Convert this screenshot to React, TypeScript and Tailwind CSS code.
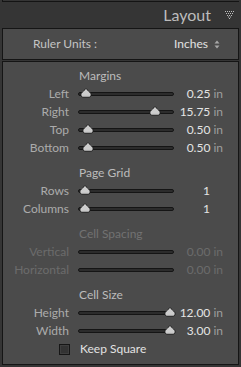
import React from 'react'

type Row = {
  label: string
  value?: string
  unit?: boolean
  pos?: number
}

type Section = {
  title: string
  disabled?: boolean
  rows: Row[]
}

const sections: Section[] = [
  {
    title: 'Margins',
    rows: [
      { label: 'Left', value: '0.25', unit: true, pos: 0.08 },
      { label: 'Right', value: '15.75', unit: true, pos: 0.8 },
      { label: 'Top', value: '0.50', unit: true, pos: 0.1 },
      { label: 'Bottom', value: '0.50', unit: true, pos: 0.1 },
    ],
  },
  {
    title: 'Page Grid',
    rows: [
      { label: 'Rows', value: '1', pos: 0.07 },
      { label: 'Columns', value: '1', pos: 0.07 },
    ],
  },
  {
    title: 'Cell Spacing',
    disabled: true,
    rows: [
      { label: 'Vertical', value: '0.00', unit: true },
      { label: 'Horizontal', value: '0.00', unit: true },
    ],
  },
  {
    title: 'Cell Size',
    rows: [
      { label: 'Height', value: '12.00', unit: true, pos: 0.96 },
      { label: 'Width', value: '3.00', unit: true, pos: 0.96 },
    ],
  },
]

function Thumb() {
  return (
    <svg width="12" height="10" viewBox="0 0 12 10" className="block">
      <path
        d="M6 0.5 C7 2 9.5 3.5 10.8 5.5 C11.6 7 10.8 9.3 9 9.3 L3 9.3 C1.2 9.3 0.4 7 1.2 5.5 C2.5 3.5 5 2 6 0.5 Z"
        fill="#cdcdcd"
        stroke="#1c1c1c"
        strokeWidth="0.9"
      />
      <path d="M3 8.4 L9 8.4" stroke="#9a9a9a" strokeWidth="0.8" />
    </svg>
  )
}

function Slider({ pos }: { pos?: number }) {
  return (
    <div className="relative w-[96px] h-[18px] flex items-center">
      <div className="w-full h-[4px] rounded-full bg-[#2c2c2c] border border-[#151515]" />
      {pos !== undefined && (
        <div
          className="absolute top-[3px] -translate-x-1/2"
          style={{ left: `${pos * 100}%` }}
        >
          <Thumb />
        </div>
      )}
    </div>
  )
}

// dotted "collapse" triangle in the panel header
function CollapseIcon() {
  const dots: [number, number][] = [
    [0, 0], [2, 0], [4, 0], [6, 0], [8, 0],
    [1, 2], [3, 2], [5, 2], [7, 2],
    [2, 4], [4, 4], [6, 4],
    [3, 5.5], [5, 5.5],
    [4, 7],
  ]
  return (
    <svg width="9" height="8" viewBox="0 0 9 8" className="block">
      {dots.map(([x, y]) => (
        <rect key={`${x}-${y}`} x={x} y={y} width="1" height="1" fill="#bdbdbd" />
      ))}
    </svg>
  )
}

export default function App() {
  return (
    <div
      className="w-[241px] h-[367px] bg-[#353535] overflow-hidden"
      style={{ fontFamily: 'Lato, "Open Sans", sans-serif' }}
    >
      {/* bottom edge of previous panel */}
      <div className="mx-[2px] h-[2px] border-l border-b border-[#141414]" />

      <div className="h-[26px] flex items-center justify-end pr-[7px]">
        <span className="text-[16px] leading-none text-[#bcbcbc] mr-[14px]">Layout</span>
        <CollapseIcon />
      </div>

      <div className="mx-[2px] h-[32px] bg-[#4b4b4b] border border-[#151515] flex items-center pl-[30px] pr-[18px]">
        <span className="text-[12px] text-[#c4c4c4]">Ruler Units :</span>
        <span className="ml-auto text-[12px] text-[#e2e2e2]">Inches</span>
        <svg width="6" height="9" viewBox="0 0 6 9" className="ml-[6px] block">
          <path d="M0.5 3.5 L3 0.5 L5.5 3.5 Z" fill="#a8a8a8" />
          <path d="M0.5 5.5 L3 8.5 L5.5 5.5 Z" fill="#a8a8a8" />
        </svg>
      </div>

      <div className="mx-[2px] mt-px h-[304px] bg-[#4b4b4b] border border-[#151515] pt-[5px] flex flex-col gap-[7px]">
        {sections.map((s) => (
          <div key={s.title} className="flex flex-col">
            <div
              className={`h-[18px] flex items-center pl-[76px] text-[12px] ${
                s.disabled ? 'text-[#727272]' : 'text-[#bcbcbc]'
              }`}
            >
              {s.title}
            </div>
            {s.rows.map((r) => (
              <div key={r.label} className="h-[18px] flex items-center text-[12px]">
                <span
                  className={`w-[66px] text-right ${
                    s.disabled ? 'text-[#6c6c6c]' : 'text-[#ababab]'
                  }`}
                >
                  {r.label}
                </span>
                <div className="ml-[9px]">
                  <Slider pos={s.disabled ? undefined : r.pos} />
                </div>
                <span className="w-[49px] text-right whitespace-nowrap">
                  <span className={s.disabled ? 'text-[#6c6c6c]' : 'text-[#e4e4e4]'}>
                    {r.value}
                  </span>
                  {r.unit ? (
                    <span className={s.disabled ? 'text-[#6c6c6c]' : 'text-[#9e9e9e]'}> in</span>
                  ) : (
                    <span className="inline-block w-[13px]" />
                  )}
                </span>
              </div>
            ))}
          </div>
        ))}
        <div className="h-[18px] flex items-center -mt-[7px] pl-[56px] text-[12px]">
          <span className="w-[11px] h-[11px] bg-[#333333] border border-[#161616] shadow-[inset_0_0_0_1px_#3e3e3e]" />
          <span className="ml-[10px] text-[#e2e2e2]">Keep Square</span>
        </div>
      </div>
    </div>
  )
}
